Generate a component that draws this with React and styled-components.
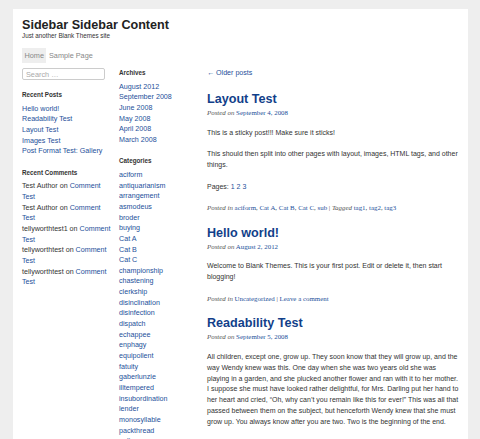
import styled, { createGlobalStyle } from "styled-components";

const GlobalStyle = createGlobalStyle`
  html, body {
    margin: 0;
    padding: 0;
    background: #eeeeee;
  }
  body {
    font-family: "Liberation Sans", Arial, sans-serif;
    color: #333;
    overflow: hidden;
  }
  a {
    color: #24509a;
    text-decoration: none;
  }
`;

const Page = styled.div`
  width: 455px;
  margin: 9px 0 0 13px;
  background: #fff;
  padding: 9px 6px 20px 9px;
  box-sizing: border-box;
  min-height: 500px;
`;

const SiteTitle = styled.h1`
  margin: 0;
  font-size: 12.6px;
  line-height: 14px;
  font-weight: bold;
  color: #222;
`;

const Tagline = styled.div`
  font-size: 6.3px;
  line-height: 7px;
  color: #333;
`;

const Nav = styled.ul`
  display: flex;
  list-style: none;
  margin: 9px 0 0;
  padding: 0;
  height: 15px;
`;

const NavItem = styled.li`
  padding: 0 2.5px;
  font-size: 7.3px;
  line-height: 15px;
  color: #888;
  background: ${p => (p.$current ? "#eeeeee" : "transparent")};
`;

const Main = styled.div`
  display: flex;
  margin-top: 5px;
  align-items: flex-start;
`;

const Sidebar = styled.aside`
  width: ${p => p.$width}px;
  flex-shrink: 0;
  margin-right: ${p => p.$gap}px;
  font-size: 7.15px;
  line-height: 10.65px;
`;

const SearchBox = styled.input`
  display: block;
  width: 83px;
  height: 12px;
  box-sizing: border-box;
  border: 1px solid #ccc;
  border-radius: 2px;
  padding: 0 3px;
  font-family: "Liberation Sans", Arial, sans-serif;
  font-size: 7.3px;
  color: #999;
  margin-bottom: 10px;
  &::placeholder {
    color: #aaa;
  }
`;

const Widget = styled.section`
  margin-bottom: 10.6px;
`;

const WidgetTitle = styled.h3`
  margin: 0 0 3.7px;
  font-size: 6.3px;
  line-height: 10px;
  font-weight: bold;
  color: #333;
`;

const List = styled.ul`
  list-style: none;
  margin: 0;
  padding: 0;
`;

const Content = styled.main`
  flex: 1;
  min-width: 0;
  padding-right: 3px;
  font-size: 7px;
  line-height: 10.85px;
`;

const OlderLink = styled.a`
  display: block;
  font-size: 7.1px;
`;

const Post = styled.article`
  margin-top: 11.6px;
`;

const PostTitle = styled.h2`
  margin: 0;
  font-size: 12.6px;
  line-height: 18px;
  font-weight: bold;
  color: #123f8a;
`;

const Meta = styled.div`
  font-family: "Liberation Serif", "Times New Roman", serif;
  font-size: 6.9px;
  line-height: 9px;
  color: #444;
  em {
    font-style: italic;
    color: #555;
  }
`;

const Entry = styled.div`
  margin: 10.6px 0;
  p {
    margin: 10.6px 0 0;
  }
  p:first-child {
    margin-top: 0;
  }
`;

const recentPosts = ["Hello world!", "Readability Test", "Layout Test", "Images Test", "Post Format Test: Gallery"];
const recentComments = ["Test Author", "Test Author", "tellyworthtest1", "tellyworthtest", "tellyworthtest"];
const archives = ["August 2012", "September 2008", "June 2008", "May 2008", "April 2008", "March 2008"];
const categories = [
  "aciform", "antiquarianism", "arrangement", "asmodeus", "broder", "buying", "Cat A", "Cat B", "Cat C",
  "championship", "chastening", "clerkship", "disinclination", "disinfection", "dispatch", "echappee",
  "enphagy", "equipollent", "fatuity", "gaberlunzie", "illtempered", "insubordination", "lender",
  "monosyllable", "packthread", "palter", "papilionaceous", "personable",
];

export default function App() {
  return (
    <>
      <GlobalStyle />
      <Page>
        <SiteTitle>Sidebar Sidebar Content</SiteTitle>
        <Tagline>Just another Blank Themes site</Tagline>
        <Nav>
          <NavItem $current>Home</NavItem>
          <NavItem>Sample Page</NavItem>
        </Nav>

        <Main>
          <Sidebar $width={91} $gap={6}>
            <SearchBox placeholder="Search …" />
            <Widget>
              <WidgetTitle>Recent Posts</WidgetTitle>
              <List>
                {recentPosts.map(p => (
                  <li key={p}><a href="#">{p}</a></li>
                ))}
              </List>
            </Widget>
            <Widget>
              <WidgetTitle>Recent Comments</WidgetTitle>
              <List>
                {recentComments.map((c, i) => (
                  <li key={i}>{c} on <a href="#">Comment Test</a></li>
                ))}
              </List>
            </Widget>
          </Sidebar>

          <Sidebar $width={79} $gap={9}>
            <Widget>
              <WidgetTitle>Archives</WidgetTitle>
              <List>
                {archives.map(a => (
                  <li key={a}><a href="#">{a}</a></li>
                ))}
              </List>
            </Widget>
            <Widget>
              <WidgetTitle>Categories</WidgetTitle>
              <List>
                {categories.map(c => (
                  <li key={c}><a href="#">{c}</a></li>
                ))}
              </List>
            </Widget>
          </Sidebar>

          <Content>
            <OlderLink href="#">← Older posts</OlderLink>

            <Post>
              <PostTitle>Layout Test</PostTitle>
              <Meta><em>Posted on</em> <a href="#">September 4, 2008</a></Meta>
              <Entry>
                <p>This is a sticky post!!! Make sure it sticks!</p>
                <p>This should then split into other pages with layout, images, HTML tags, and other things.</p>
                <p>Pages: <a href="#">1</a> <a href="#">2</a> <a href="#">3</a></p>
              </Entry>
              <Meta>
                <em>Posted in</em> <a href="#">aciform</a>, <a href="#">Cat A</a>, <a href="#">Cat B</a>, <a href="#">Cat C</a>, <a href="#">sub</a> | <em>Tagged</em> <a href="#">tag1</a>, <a href="#">tag2</a>, <a href="#">tag3</a>
              </Meta>
            </Post>

            <Post>
              <PostTitle>Hello world!</PostTitle>
              <Meta><em>Posted on</em> <a href="#">August 2, 2012</a></Meta>
              <Entry>
                <p>Welcome to Blank Themes. This is your first post. Edit or delete it, then start blogging!</p>
              </Entry>
              <Meta>
                <em>Posted in</em> <a href="#">Uncategorized</a> | <a href="#">Leave a comment</a>
              </Meta>
            </Post>

            <Post>
              <PostTitle>Readability Test</PostTitle>
              <Meta><em>Posted on</em> <a href="#">September 5, 2008</a></Meta>
              <Entry>
                <p>
                  All children, except one, grow up. They soon know that they will grow up, and the way Wendy knew was this. One day when she was two years old she was playing in a garden, and she plucked another flower and ran with it to her mother. I suppose she must have looked rather delightful, for Mrs. Darling put her hand to her heart and cried, “Oh, why can’t you remain like this for ever!” This was all that passed between them on the subject, but henceforth Wendy knew that she must grow up. You always know after you are two. Two is the beginning of the end.
                </p>
                <p><a href="#">Continue reading →</a></p>
              </Entry>
            </Post>
          </Content>
        </Main>
      </Page>
    </>
  );
}
